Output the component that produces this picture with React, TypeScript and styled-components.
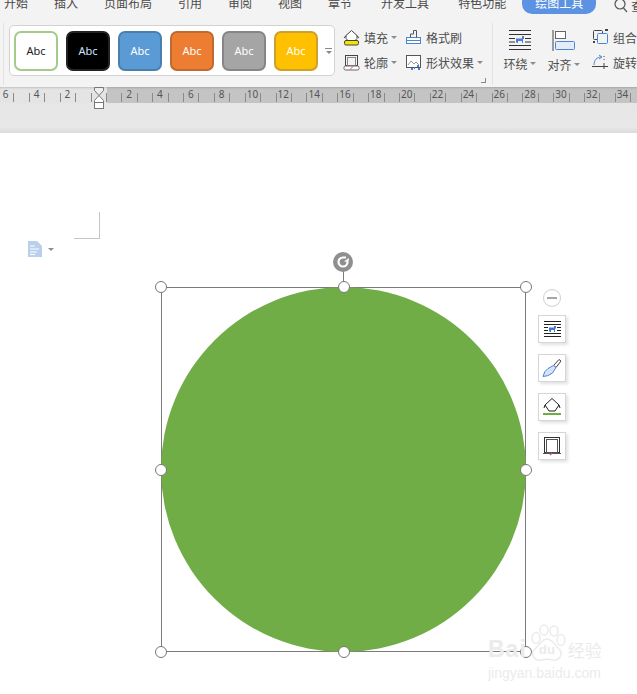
import { ReactNode } from "react";
import styled, { createGlobalStyle } from "styled-components";

const Global = createGlobalStyle`
  html, body { margin: 0; padding: 0; background: #fff; }
  body { font-family: "Noto Sans CJK SC", "Noto Sans", sans-serif; }
`;

const Frame = styled.div`
  position: relative;
  width: 637px;
  height: 694px;
  overflow: hidden;
  background: #fff;
`;

/* ---------- tabs ---------- */

const TabBar = styled.div`
  display: flex;
  align-items: flex-end;
  height: 14px;
  padding-left: 4px;
  background: #f3f3f3;
  overflow: hidden;
`;

const Tab = styled.div<{ $gap?: number }>`
  flex-shrink: 0;
  margin-right: ${(p) => p.$gap ?? 26}px;
  font-size: 12px;
  line-height: 14px;
  height: 14px;
  position: relative;
  top: -4px;
  color: #4a4a4a;
  white-space: nowrap;
`;

const ActiveTab = styled.div`
  flex-shrink: 0;
  width: 74px;
  height: 14px;
  margin-right: 18px;
  border-radius: 0 0 10px 10px;
  background: #5b93e2;
  color: #fff;
  font-size: 12px;
  line-height: 14px;
  text-align: center;
  overflow: hidden;
  span { position: relative; top: -4px; }
`;

const SearchTab = styled.div`
  flex-shrink: 0;
  display: flex;
  align-items: flex-start;
  align-self: flex-start;
  gap: 2px;
  color: #4a4a4a;
  font-size: 12px;
  line-height: 12px;
  white-space: nowrap;
`;

/* ---------- ribbon ---------- */

const Ribbon = styled.div`
  display: flex;
  align-items: flex-start;
  height: 73px;
  background: #f3f3f3;
  position: relative;
`;

const Divider = styled.div<{ $left: number; $right: number }>`
  width: 1px;
  height: 62px;
  margin: 9px ${(p) => p.$right}px 0 ${(p) => p.$left}px;
  background: #e2e2e2;
  flex-shrink: 0;
`;

const Gallery = styled.div`
  display: flex;
  align-items: center;
  box-sizing: border-box;
  width: 326px;
  height: 51px;
  margin-top: 11px;
  padding-left: 4px;
  gap: 8px;
  background: #fff;
  border: 1px solid #d2d2d2;
  border-radius: 5px;
  flex-shrink: 0;
  position: relative;
`;

const Swatch = styled.div<{ $bg: string; $line: string; $fg: string }>`
  box-sizing: border-box;
  width: 44px;
  height: 40px;
  border-radius: 7px;
  background: ${(p) => p.$bg};
  border: 2px solid ${(p) => p.$line};
  color: ${(p) => p.$fg};
  font-family: "Noto Sans", sans-serif;
  font-size: 11px;
  line-height: 36px;
  text-align: center;
`;

const GalleryMore = styled.div`
  position: absolute;
  right: 2px;
  top: 22px;
  width: 7px;
  border-top: 1px solid #888;
  padding-top: 1px;
  &::after {
    content: "";
    display: block;
    margin: 1px auto 0;
    width: 0;
    border-left: 3px solid transparent;
    border-right: 3px solid transparent;
    border-top: 3px solid #888;
  }
`;

const Stack = styled.div<{ $width: number; $left?: number }>`
  display: flex;
  flex-direction: column;
  gap: 7px;
  width: ${(p) => p.$width}px;
  margin-top: 14px;
  margin-left: ${(p) => p.$left ?? 0}px;
  flex-shrink: 0;
`;

const ToolRow = styled.div`
  display: flex;
  align-items: center;
  gap: 4px;
  height: 18px;
  font-size: 12px;
  color: #4d4d4d;
  white-space: nowrap;
`;

const Caret = styled.span`
  display: inline-block;
  width: 0;
  margin-left: -1px;
  border-left: 3px solid transparent;
  border-right: 3px solid transparent;
  border-top: 3px solid #8c8c8c;
`;

const LargeTool = styled.div<{ $width: number; $left?: number }>`
  display: flex;
  flex-direction: column;
  align-items: center;
  width: ${(p) => p.$width}px;
  margin-top: 16px;
  margin-left: ${(p) => p.$left ?? 0}px;
  flex-shrink: 0;
  font-size: 12px;
  color: #4d4d4d;
`;

const LargeLabel = styled.div`
  display: flex;
  align-items: center;
  gap: 3px;
  height: 18px;
  margin-top: 4px;
  white-space: nowrap;
`;

const Launcher = styled.div`
  position: absolute;
  left: 481px;
  top: 64px;
  width: 4px;
  height: 4px;
  border-right: 1px solid #888;
  border-bottom: 1px solid #888;
`;

/* ---------- ruler ---------- */

const Ruler = styled.div`
  display: flex;
  height: 16px;
  margin-left: -1px;
  background: #e4e4e4;
`;

const RulerCell = styled.div<{ $dark: boolean }>`
  position: relative;
  box-sizing: border-box;
  flex: 0 0 15.43px;
  height: 16px;
  padding-right: 2px;
  background: ${(p) => (p.$dark ? "#c4c4c4" : "#e4e4e4")};
  box-shadow: inset 0 3px 2px -2px rgba(0, 0, 0, 0.15);
  font-family: "Noto Sans", sans-serif;
  font-size: 10px;
  line-height: 15px;
  color: #555;
  text-align: center;
  white-space: nowrap;
  &::after {
    content: "";
    position: absolute;
    right: 0;
    top: 6px;
    width: 1px;
    height: 9px;
    background: #8a8a8a;
  }
`;

const Indent = styled.svg`
  position: absolute;
  left: 93px;
  top: 87px;
`;

const RulerGutter = styled.div`
  height: 29px;
  background: linear-gradient(#e6e6e6 0, #e8e8e8 85%, #dcdcdc 100%);
  border-bottom: 1px solid #dedede;
`;

/* ---------- page ---------- */

const Page = styled.div`
  position: relative;
  height: 561px;
  background: #fff;
`;

const MarginMark = styled.div`
  position: absolute;
  left: 74px;
  top: 79px;
  width: 25px;
  height: 26px;
  border-right: 1px solid #c6c6c6;
  border-bottom: 1px solid #c6c6c6;
`;

const DocMenu = styled.div`
  position: absolute;
  left: 28px;
  top: 108px;
  display: flex;
  align-items: center;
  gap: 7px;
`;

const Shape = styled.div`
  position: absolute;
  left: 161px;
  top: 154px;
  box-sizing: border-box;
  width: 365px;
  height: 365px;
  border: 1px solid #7b7b7b;
`;

const Circle = styled.div`
  position: absolute;
  inset: -1px;
  border-radius: 50%;
  background: #70ad47;
`;

const HandleLayer = styled.div`
  position: absolute;
  inset: -1px;
`;

const Handle = styled.div<{ $x: number; $y: number }>`
  position: absolute;
  left: ${(p) => p.$x}%;
  top: ${(p) => p.$y}%;
  box-sizing: border-box;
  width: 12px;
  height: 12px;
  margin: -6px 0 0 -6px;
  border-radius: 50%;
  background: #fff;
  border: 1px solid #777;
`;

const RotateStem = styled.div`
  position: absolute;
  left: 50%;
  top: -17px;
  width: 1px;
  height: 17px;
  margin-left: -1px;
  background: #7b7b7b;
`;

const RotateKnob = styled.div`
  position: absolute;
  left: 50%;
  top: -36px;
  width: 20px;
  height: 20px;
  margin-left: -11px;
  border-radius: 50%;
  background: #8f8f8f;
  display: flex;
  align-items: center;
  justify-content: center;
`;

const SideTools = styled.div`
  position: absolute;
  left: 538px;
  top: 156px;
  display: flex;
  flex-direction: column;
  align-items: center;
  gap: 11px;
`;

const Collapse = styled.div`
  box-sizing: border-box;
  width: 18px;
  height: 18px;
  margin-bottom: -3px;
  border-radius: 50%;
  background: #fff;
  border: 1px solid #cfcfcf;
  display: flex;
  align-items: center;
  justify-content: center;
  &::after {
    content: "";
    width: 10px;
    height: 2px;
    background: #a6a6a6;
  }
`;

const SideButton = styled.div`
  box-sizing: border-box;
  width: 28px;
  height: 28px;
  background: #fff;
  border: 1px solid #d6d6d6;
  box-shadow: 2px 2px 3px rgba(0, 0, 0, 0.12);
  display: flex;
  align-items: center;
  justify-content: center;
`;

const Watermark = styled.div`
  position: absolute;
  left: 488px;
  top: 491px;
  width: 118px;
  color: #ebebeb;
`;

const WatermarkTop = styled.div`
  display: flex;
  align-items: flex-end;
  height: 38px;
`;

const WatermarkBai = styled.span`
  font-family: "Liberation Sans", sans-serif;
  font-weight: 700;
  font-size: 23px;
  line-height: 26px;
  letter-spacing: 1px;
`;

const WatermarkCn = styled.span`
  font-size: 17px;
  line-height: 24px;
  margin-left: 1px;
`;

const WatermarkUrl = styled.div`
  font-family: "Liberation Sans", sans-serif;
  font-size: 14px;
  line-height: 16px;
  margin-top: 3px;
  white-space: nowrap;
`;

/* ---------- icons ---------- */

const FillIcon = () => (
  <svg width="17" height="17" viewBox="0 0 17 17" fill="none">
    <path d="M3 6.500l5.500-5 5.500 5v3l-2 2H5l-2-2z" stroke="#444" fill="#fff" />
    <path d="M1 9l2-2.500M14 6.500l2 2.500" stroke="#444" />
    <rect x="1.500" y="11.500" width="14" height="4.500" rx="1.500" fill="#f2e600" stroke="#444" />
  </svg>
);

const OutlineIcon = () => (
  <svg width="17" height="17" viewBox="0 0 17 17" fill="none">
    <rect x="2.500" y="1.500" width="12" height="10" stroke="#444" />
    <rect x="4.500" y="3.500" width="8" height="8" stroke="#888" />
    <rect x="1" y="12" width="15" height="4" rx="1.500" fill="#fff" stroke="#666" />
    <path d="M7 15.500l3-3" stroke="#d9534f" />
  </svg>
);

const BrushIcon = () => (
  <svg width="17" height="17" viewBox="0 0 17 17" fill="none">
    <rect x="1.500" y="8.500" width="14" height="6" fill="#fff" stroke="#4a86d6" />
    <path d="M5.500 8.500V5h3V1.500h3V5h0v3.500" stroke="#555" />
    <path d="M1.500 11.500h14" stroke="#4a86d6" />
  </svg>
);

const EffectIcon = () => (
  <svg width="17" height="17" viewBox="0 0 17 17" fill="none">
    <rect x="1.500" y="1.500" width="14" height="12" stroke="#555" fill="#fff" />
    <path d="M3 11l3-4 3 3 2-2 3 3" stroke="#999" />
    <path d="M9 14h1M12 12h2M13 15h2M6 15h2" stroke="#3f7fd8" strokeWidth="2" />
  </svg>
);

const WrapIcon = () => (
  <svg width="22" height="20" viewBox="0 0 22 20" fill="none">
    <path d="M0 .5h22M0 19.500h22M0 4.500h22M0 15.500h22M0 8.500h6M16 8.500h6M0 12h6M16 12h6" stroke="#333" />
    <path d="M7 12V8.500h6V6h2v3h-1v4h-1v-2H9v2H8z" fill="#4a7fd0" />
  </svg>
);

const SideWrapIcon = () => (
  <svg width="17" height="16" viewBox="0 0 17 16" fill="none">
    <path d="M0 .5h17M0 15.500h17M0 3.500h17M0 12.500h17M0 6.500h4M13 6.500h4M0 9.500h4M13 9.500h4" stroke="#222" />
    <path d="M5 10V6.500h5V5h2v2.500h-1V11h-1V9H7v2H6z" fill="#3f76d0" />
  </svg>
);

const AlignIcon = () => (
  <svg width="23" height="21" viewBox="0 0 23 21" fill="none">
    <path d="M1 0v21" stroke="#444" />
    <rect x="3.500" y="1.500" width="10" height="7" stroke="#666" fill="#fff" />
    <rect x="3.500" y="11.500" width="19" height="8" rx="1" stroke="#4a86d6" fill="#e4ecf8" />
  </svg>
);

const GroupIcon = () => (
  <svg width="17" height="16" viewBox="0 0 17 16" fill="none">
    <rect x="1.500" y="1.500" width="9" height="9" rx="1" stroke="#444" />
    <rect x="5.500" y="4.500" width="10" height="10" rx="1" stroke="#4a86d6" fill="#f3f3f3" />
    <path d="M1 13h2M13 1h3" stroke="#444" strokeWidth="2" />
  </svg>
);

const RotateIcon = () => (
  <svg width="17" height="16" viewBox="0 0 17 16" fill="none">
    <path d="M2 11C2 6 5 3 9 3" stroke="#4a86d6" />
    <path d="M7 1l3 2-3 2" stroke="#4a86d6" />
    <path d="M0 12.500h16M12 9v6M12 2v1M12 5v1" stroke="#444" />
  </svg>
);

const SearchIcon = () => (
  <svg width="15" height="14" viewBox="0 0 15 14" fill="none">
    <circle cx="6" cy="4" r="5" stroke="#555" strokeWidth="1.200" />
    <path d="M9.500 8l3.500 4" stroke="#555" strokeWidth="1.200" />
  </svg>
);

const KnifeIcon = () => (
  <svg width="20" height="20" viewBox="0 0 20 20" fill="none">
    <path d="M11.500 7.500L17 1.500l2 1.500-5 6.500z" fill="#fff" stroke="#444" />
    <path d="M11.500 7.500l2.500 2-3.500 5.500Q6 18.500 1 18.500 2 13 6 10.500z" fill="#d6e3f6" stroke="#4a86d6" />
  </svg>
);

const SideFillIcon = () => (
  <svg width="20" height="20" viewBox="0 0 20 20" fill="none">
    <path d="M10 1.500l7 6.500-4 6H7L3 8z" stroke="#222" fill="#fff" />
    <path d="M3 8l-1 3M17 8l1 3" stroke="#222" />
    <rect x="1" y="16" width="18" height="2" fill="#70ad47" />
  </svg>
);

const SideOutlineIcon = () => (
  <svg width="20" height="20" viewBox="0 0 20 20" fill="none">
    <rect x="2.500" y="1.500" width="15" height="15" stroke="#333" />
    <rect x="4.500" y="3.500" width="11" height="13" stroke="#555" />
    <path d="M1 17.500h18" stroke="#555" />
    <path d="M8 19l2-2" stroke="#d9534f" strokeWidth="1.500" />
  </svg>
);

const DocIcon = () => (
  <svg width="14" height="16" viewBox="0 0 14 16">
    <path d="M0 0h9l5 5v11H0z" fill="#b9cfeb" />
    <path d="M2 5h5M2 8h9M2 11h7M2 13.500h5" stroke="#fff" />
  </svg>
);

const RotateGlyph = () => (
  <svg width="14" height="14" viewBox="0 0 14 14" fill="none">
    <path d="M11.500 7A4.500 4.500 0 1 1 7 2.500h3" stroke="#fff" strokeWidth="2.200" />
    <path d="M8 6.500l4.500.5L13 3z" fill="#fff" />
  </svg>
);

const Paw = () => (
  <svg width="40" height="38" viewBox="0 0 40 38" fill="none" stroke="#ebebeb" strokeWidth="1.500">
    <ellipse cx="9" cy="14" rx="4" ry="5.500" />
    <ellipse cx="17" cy="6" rx="4" ry="5" />
    <ellipse cx="27" cy="7" rx="4" ry="5" />
    <ellipse cx="34" cy="16" rx="4" ry="5.500" />
    <path d="M20 15c-6 0-9 8-13 11-4 5 1 11 7 10 4-1 8-1 12 0 6 1 10-5 7-10-4-3-7-11-13-11z" />
    <text x="20" y="30" fontFamily="Liberation Sans, sans-serif" fontWeight="700" fontSize="13" fill="#ebebeb" stroke="none" textAnchor="middle">du</text>
  </svg>
);

/* ---------- data ---------- */

const swatches = [
  { bg: "#fff", line: "#a3cc8a", fg: "#222" },
  { bg: "#000", line: "#222", fg: "#cfe3ff" },
  { bg: "#5b9bd5", line: "#4a7ead", fg: "#fff" },
  { bg: "#ed7d31", line: "#bf6a30", fg: "#fff" },
  { bg: "#a5a5a5", line: "#868686", fg: "#fff" },
  { bg: "#ffc000", line: "#cca02a", fg: "#fff" },
];

const rulerCells = Array.from({ length: 42 }, (_, i) => ({
  label: i % 2 === 0 && i !== 6 ? String(Math.abs(i - 6)) : "",
  dark: i >= 7,
}));

const handles = [
  [0, 0], [50, 0], [100, 0],
  [0, 50], [100, 50],
  [0, 100], [50, 100], [100, 100],
];

const Tool = ({ icon, label, caret }: { icon: ReactNode; label: string; caret?: boolean }) => (
  <ToolRow>
    {icon}
    <span>{label}</span>
    {caret && <Caret />}
  </ToolRow>
);

export default function App(): JSX.Element {
  return (
    <Frame>
      <Global />
      <TabBar>
        <Tab>开始</Tab>
        <Tab>插入</Tab>
        <Tab>页面布局</Tab>
        <Tab>引用</Tab>
        <Tab>审阅</Tab>
        <Tab>视图</Tab>
        <Tab $gap={29}>章节</Tab>
        <Tab $gap={29}>开发工具</Tab>
        <Tab $gap={16}>特色功能</Tab>
        <ActiveTab>
          <span>绘图工具</span>
        </ActiveTab>
        <SearchTab>
          <SearchIcon />
          查找
        </SearchTab>
      </TabBar>

      <Ribbon>
        <Divider $left={3} $right={5} />
        <Gallery>
          {swatches.map((s) => (
            <Swatch key={s.bg} $bg={s.bg} $line={s.line} $fg={s.fg}>
              Abc
            </Swatch>
          ))}
          <GalleryMore />
        </Gallery>
        <Stack $width={62} $left={8}>
          <Tool icon={<FillIcon />} label="填充" caret />
          <Tool icon={<OutlineIcon />} label="轮廓" caret />
        </Stack>
        <Stack $width={86}>
          <Tool icon={<BrushIcon />} label="格式刷" />
          <Tool icon={<EffectIcon />} label="形状效果" caret />
        </Stack>
        <Divider $left={1} $right={9} />
        <LargeTool $width={37} $left={-1}>
          <WrapIcon />
          <LargeLabel>
            环绕
            <Caret />
          </LargeLabel>
        </LargeTool>
        <LargeTool $width={37} $left={7}>
          <AlignIcon />
          <LargeLabel>
            对齐
            <Caret />
          </LargeLabel>
        </LargeTool>
        <Stack $width={60} $left={10}>
          <Tool icon={<GroupIcon />} label="组合" />
          <Tool icon={<RotateIcon />} label="旋转" />
        </Stack>
        <Launcher />
      </Ribbon>

      <Ruler>
        {rulerCells.map((c, i) => (
          <RulerCell key={i} $dark={c.dark}>
            {c.label}
          </RulerCell>
        ))}
      </Ruler>
      <Indent width="12" height="22" viewBox="0 0 12 22" fill="none">
        <path d="M1.500.5h9v3L6 8.500 1.500 3.500z" fill="#eee" stroke="#777" />
        <path d="M6 8.500l4.500 5v2h-9v-2z" fill="#fff" stroke="#777" />
        <rect x="1.500" y="15.500" width="9" height="6" fill="#fff" stroke="#777" />
      </Indent>
      <RulerGutter />

      <Page>
        <MarginMark />
        <DocMenu>
          <DocIcon />
          <Caret />
        </DocMenu>
        <Shape>
          <Circle />
          <RotateStem />
          <RotateKnob>
            <RotateGlyph />
          </RotateKnob>
          <HandleLayer>
            {handles.map(([x, y]) => (
              <Handle key={`${x}-${y}`} $x={x} $y={y} />
            ))}
          </HandleLayer>
        </Shape>
        <SideTools>
          <Collapse />
          <SideButton>
            <SideWrapIcon />
          </SideButton>
          <SideButton>
            <KnifeIcon />
          </SideButton>
          <SideButton>
            <SideFillIcon />
          </SideButton>
          <SideButton>
            <SideOutlineIcon />
          </SideButton>
        </SideTools>
        <Watermark>
          <WatermarkTop>
            <WatermarkBai>Bai</WatermarkBai>
            <Paw />
            <WatermarkCn>经验</WatermarkCn>
          </WatermarkTop>
          <WatermarkUrl>jingyan.baidu.com</WatermarkUrl>
        </Watermark>
      </Page>
    </Frame>
  );
}
